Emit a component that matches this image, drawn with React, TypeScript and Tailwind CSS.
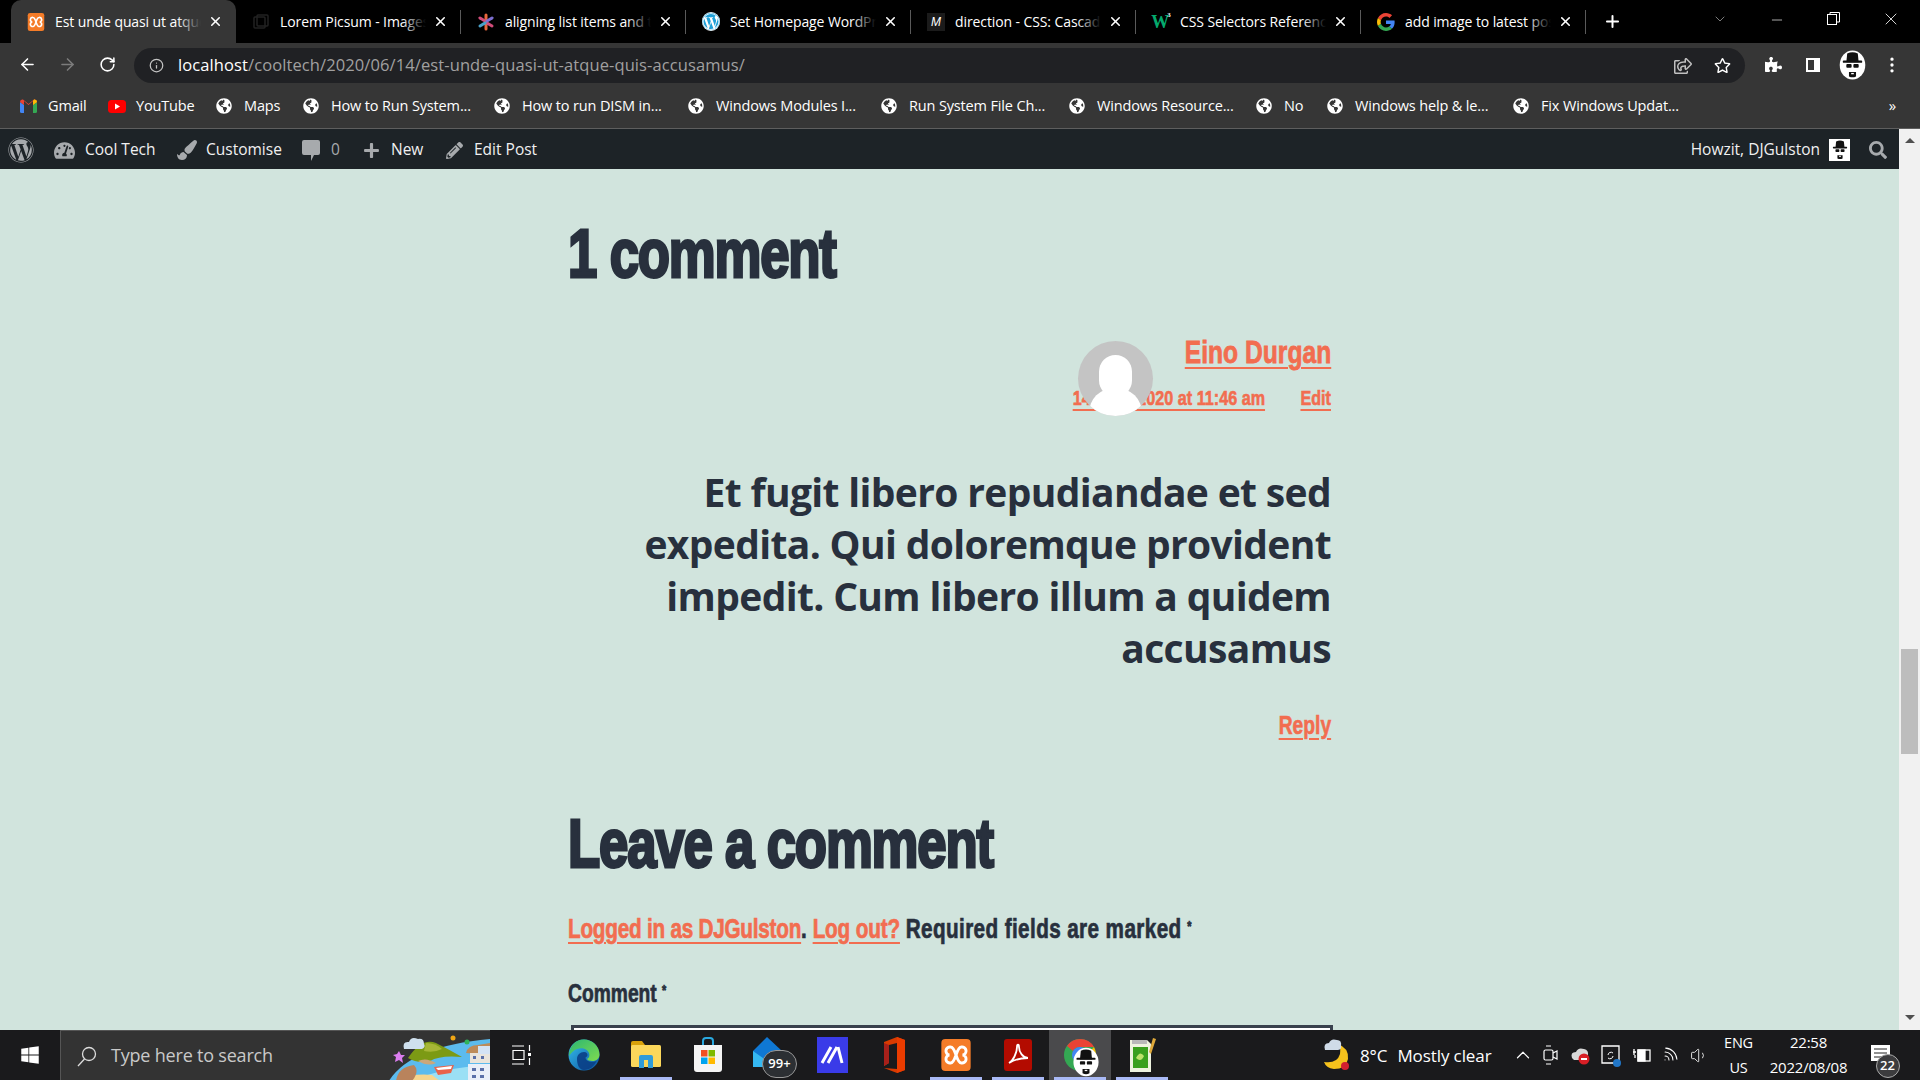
import React from "react";
import { FaWordpress, FaGlobeAmericas, FaTachometerAlt, FaPaintBrush, FaPlus, FaPencilAlt, FaSearch, FaWindows, FaPuzzlePiece, FaRegStar, FaRegShareSquare } from "react-icons/fa";
import { ArrowLeft, ArrowRight, RotateCw, Info, X, Plus, ChevronDown, Minus, EllipsisVertical, ChevronUp, Wifi, Volume1 } from "lucide-react";

const impact = "font-['Liberation_Sans',sans-serif] font-bold";

function Google({ size = 18 }: { size?: number }) {
  return (
    <svg width={size} height={size} viewBox="0 0 48 48">
      <path fill="#EA4335" d="M24 9.5c3.5 0 6.7 1.2 9.2 3.600l6.900-6.900C35.900 2.400 30.400 0 24 0 14.600 0 6.500 5.400 2.600 13.200l8 6.200C12.500 13.600 17.800 9.500 24 9.500z" />
      <path fill="#4285F4" d="M47 24.500c0-1.600-.1-3.100-.4-4.500H24v9h13c-.6 3-2.300 5.500-4.800 7.200l7.700 6c4.500-4.200 7.100-10.300 7.100-17.700z" />
      <path fill="#FBBC05" d="M10.500 28.600c-.5-1.400-.8-3-.8-4.600s.3-3.200.8-4.600l-8-6.200C.9 16.500 0 20.100 0 24s.9 7.500 2.600 10.800l7.900-6.200z" />
      <path fill="#34A853" d="M24 48c6.500 0 11.900-2.100 15.900-5.800l-7.700-6c-2.200 1.400-4.900 2.300-8.200 2.300-6.200 0-11.500-4.200-13.400-9.800l-8 6.200C6.500 42.600 14.600 48 24 48z" />
    </svg>
  );
}

function Heisen({ w = 30, h = 34 }: { w?: number; h?: number }) {
  return (
    <svg width={w} height={h} viewBox="0 0 30 34">
      <ellipse cx="15" cy="17" rx="14.500" ry="16.500" fill="#fff" />
      <path d="M8 14 L9 4 Q15 1 21 4 L22 14 Z" fill="#111" />
      <rect x="4" y="12" width="22" height="2.500" rx="1" fill="#111" />
      <rect x="8" y="16" width="6" height="4" rx="1" fill="#111" />
      <rect x="16" y="16" width="6" height="4" rx="1" fill="#111" />
      <path d="M11 25 h8 v5 q-4 2 -8 0 Z" fill="#111" />
      <rect x="13.500" y="26" width="3" height="1.500" fill="#fff" />
    </svg>
  );
}

function Xampp({ size = 18 }: { size?: number }) {
  return (
    <svg width={size} height={size} viewBox="0 0 24 24">
      <rect x="1" y="0" width="22" height="24" rx="3" fill="#f57c28" />
      <path d="M8 6 a3 3 0 0 0 -1 6 a3 3 0 0 0 1 6 q2 0 4 -6 q2 -6 4 -6 a3 3 0 0 1 1 6 a3 3 0 0 1 -1 6 q-2 0 -4 -6 q-2 -6 -4 -6 Z" fill="none" stroke="#fff" strokeWidth="2.200" />
    </svg>
  );
}

const tabs: { icon: React.ReactNode; title: string; active?: boolean }[] = [
  { icon: <Xampp />, title: "Est unde quasi ut atque quis accusamus", active: true },
  { icon: <svg width="16" height="16" viewBox="0 0 16 16"><rect x="1" y="3" width="11" height="11" rx="1" fill="none" stroke="#222" strokeWidth="1.500" /><rect x="4" y="1" width="11" height="11" rx="1" fill="none" stroke="#222" strokeWidth="1.500" /></svg>, title: "Lorem Picsum - Images" },
  { icon: <svg width="18" height="18" viewBox="0 0 18 18"><g strokeWidth="3" strokeLinecap="round"><path d="M9 2v6" stroke="#e8663c" /><path d="M9 10v6" stroke="#e8663c" /><path d="M3 5l5 3" stroke="#d24c7a" /><path d="M15 13l-5-3" stroke="#d24c7a" /><path d="M15 5l-5 3" stroke="#7c6fd0" /><path d="M3 13l5-3" stroke="#4aa0c8" /></g></svg>, title: "aligning list items and text" },
  { icon: <FaWordpress size={19} color="#1ea0d8" className="bg-white rounded-full" />, title: "Set Homepage WordPress" },
  { icon: <span className="w-[18px] h-[18px] bg-[#1b1b1b] flex items-center justify-center text-[12px] italic text-white font-['Liberation_Sans',sans-serif]">M</span>, title: "direction - CSS: Cascading" },
  { icon: <span className="flex w-[21px] text-[#04aa6d] font-['Liberation_Serif',serif] font-bold text-[18px] leading-none">W<sup className="text-[7px] text-white top-[2px] -ml-[2px]">3</sup></span>, title: "CSS Selectors Reference" },
  { icon: <Google />, title: "add image to latest post" },
];

const bookmarks: { w: string; label: string; kind: string }[] = [
  { w: "w-[37px]", label: "Gmail", kind: "gmail" },
  { w: "w-[57px]", label: "YouTube", kind: "yt" },
  { w: "w-[36px]", label: "Maps", kind: "g" },
  { w: "w-[140px]", label: "How to Run System...", kind: "g" },
  { w: "w-[143px]", label: "How to run DISM in...", kind: "g" },
  { w: "w-[142px]", label: "Windows Modules I...", kind: "g" },
  { w: "w-[137px]", label: "Run System File Ch...", kind: "g" },
  { w: "w-[136px]", label: "Windows Resource...", kind: "g" },
  { w: "w-[20px]", label: "No", kind: "g" },
  { w: "w-[135px]", label: "Windows help & le...", kind: "g" },
  { w: "w-[139px]", label: "Fix Windows Updat...", kind: "g" },
];

function BmIcon({ kind }: { kind: string }) {
  if (kind === "gmail")
    return (
      <svg width="17" height="14" viewBox="0 0 17 14">
        <path d="M0 3v9.500Q0 14 1.500 14H4V6z" fill="#4285F4" />
        <path d="M17 3v9.500Q17 14 15.500 14H13V6z" fill="#34A853" />
        <path d="M0 3Q0 0 3 .5L8.500 5 14 .5Q17 0 17 3L13 6V2L8.500 6 4 2v4z" fill="#EA4335" />
        <path d="M13 2l1-1.500Q17 0 17 3l-4 3z" fill="#FBBC05" />
      </svg>
    );
  if (kind === "yt")
    return (
      <svg width="18" height="13" viewBox="0 0 18 13">
        <rect width="18" height="13" rx="3.500" fill="#f00" />
        <path d="M7 3.500 L12 6.500 L7 9.500 Z" fill="#fff" />
      </svg>
    );
  return <FaGlobeAmericas size={16} color="#fff" />;
}

function Edge() {
  return (
    <svg width="32" height="32" viewBox="0 0 32 32">
      <defs>
        <linearGradient id="eg1" x1="0" y1="0" x2="1" y2="1"><stop offset="0" stopColor="#35c1f1" /><stop offset="1" stopColor="#0b4f9a" /></linearGradient>
        <linearGradient id="eg2" x1="0" y1="0" x2="1" y2="1"><stop offset="0" stopColor="#2bb673" /><stop offset="1" stopColor="#7fdc4f" /></linearGradient>
      </defs>
      <circle cx="16" cy="16" r="15.500" fill="url(#eg1)" />
      <path d="M16 .5C24 .5 31.500 7 31.500 15.500c0 4-3 6.500-7 6.500-3 0-5-1-5.500-2 2-1 3-3 2-6-1.500-4-7-6-12-4C6 11 3 14 1 17 1 8 7 .5 16 .5z" fill="url(#eg2)" />
      <path d="M9 20c0-4 3-7 7-7 2.500 0 3.500 1.500 3.500 3 0 1-1 2-2 2.500 0 3 3.500 4.500 7 4.500 1.500 0 3-.5 4-1-2 5-7 9-12.500 9-5 0-7-6-7-11z" fill="#0a3f86" opacity=".9" />
    </svg>
  );
}
function Folder() {
  return (
    <svg width="32" height="30" viewBox="0 0 32 30">
      <path d="M1 3q0-2 2-2h9l3 4v3H1z" fill="#d9a20b" />
      <rect x="1" y="5" width="30" height="22" rx="1.500" fill="#fbd75b" />
      <path d="M9 28V17q0-2 2-2h10q2 0 2 2v11h-5v-8h-4v8z" fill="#2f9bd9" />
    </svg>
  );
}
function Store() {
  return (
    <svg width="30" height="36" viewBox="0 0 30 36">
      <path d="M10 9V4q0-3 3-3h4q3 0 3 3v5" fill="none" stroke="#2aa9e0" strokeWidth="2" />
      <path d="M1 8h28v24q0 3-3 3H4q-3 0-3-3z" fill="#f5f5f5" />
      <rect x="8" y="13" width="6.500" height="6.500" fill="#f25022" />
      <rect x="15.500" y="13" width="6.500" height="6.500" fill="#7fba00" />
      <rect x="8" y="20.500" width="6.500" height="6.500" fill="#00a4ef" />
      <rect x="15.500" y="20.500" width="6.500" height="6.500" fill="#ffb900" />
    </svg>
  );
}
function Mail() {
  return (
    <div className="relative w-[36px] h-[38px] mt-[2px]">
      <svg width="32" height="30" viewBox="0 0 32 30" className="absolute left-0 top-0">
        <path d="M15 0 L30 14 V30 H1 V14 Z" fill="#0f78d4" />
        <path d="M1 14 L15 24 L30 14 V30 H1 Z" fill="#35b8f2" />
      </svg>
      <span className="absolute left-[10px] top-[13px] w-[35px] h-[28px] rounded-full bg-[#2c2f33] border border-[#999] flex items-center justify-center text-white text-[13px] font-semibold">99+</span>
    </div>
  );
}
function Slash() {
  return (
    <svg width="31" height="36" viewBox="0 0 31 36">
      <rect width="31" height="36" fill="#3a3be8" />
      <path d="M5 26 L14 10 M11 26 L20 10" stroke="#fff" strokeWidth="3" />
      <path d="M21 10 L25 26" stroke="#fff" strokeWidth="3" />
    </svg>
  );
}
function Office() {
  return (
    <svg width="24" height="36" viewBox="0 0 24 36">
      <path d="M2 5 L15 0 L23 3 V33 L15 36 L2 31 L15 32 V6 L7 8 V26 L2 29 Z" fill="#d83b01" />
      <path d="M15 0 L23 3 V33 L15 36 Z" fill="#eb3c00" />
      <path d="M2 6 L7 8 V26 L2 29 Z" fill="#a8201a" />
    </svg>
  );
}
function Acrobat() {
  return (
    <svg width="28" height="32" viewBox="0 0 28 32">
      <rect width="28" height="32" rx="3" fill="#b30b00" />
      <path d="M5 24 C9 22 13 14 13 8 C13 5 15 5 15 8 C15 13 19 19 24 19 C19 19 11 20 5 24 Z" fill="none" stroke="#fff" strokeWidth="1.800" />
    </svg>
  );
}
function Chrome() {
  return (
    <div className="relative w-[34px] h-[38px]">
      <svg width="34" height="34" viewBox="0 0 34 34" className="absolute left-0 top-[2px]">
        <circle cx="17" cy="17" r="16" fill="#34a853" />
        <path d="M17 1 A16 16 0 0 1 31 9 L17 9 A8 8 0 0 0 10 13 L4 8 A16 16 0 0 1 17 1 Z" fill="#ea4335" />
        <path d="M31 9 A16 16 0 0 1 22 32 L17 25 Z" fill="#fbbc05" />
        <circle cx="17" cy="17" r="8" fill="#4285f4" />
      </svg>
      <div className="absolute left-[10px] top-[11px]"><Heisen w={26} h={30} /></div>
    </div>
  );
}
function Notes() {
  return (
    <svg width="30" height="34" viewBox="0 0 30 34">
      <path d="M3 2h17l4 4v28H3z" fill="#eef3df" />
      <rect x="5" y="2" width="15" height="4" fill="#b9b9b9" />
      <rect x="6" y="9" width="15" height="21" fill="#3aa01e" />
      <path d="M9 20 q4-8 8-2 q-3 7-8 2z" fill="#bde26a" />
      <path d="M26 0 L29 1 L24 16 L22 14 Z" fill="#e0a93a" />
    </svg>
  );
}

function Beach() {
  return (
    <svg width="120" height="50" viewBox="0 0 120 50">
      <path d="M14 60 Q30 16 120 8 V60 Z" fill="#5cbbee" />
      <path d="M30 60 Q50 38 120 34 V60 Z" fill="#9be0f5" />
      <path d="M30 50 Q40 42 62 44 L70 50 Z" fill="#f6d58e" />
      <path d="M26 50 Q28 36 44 34 Q50 40 42 50 Z" fill="#b9835c" />
      <path d="M38 27 Q52 6 66 12 Q78 18 92 26 Q70 24 60 30 Q48 33 38 27 Z" fill="#7c9a14" />
      <path d="M56 12 Q66 12 72 18 Q64 22 54 20 Z" fill="#a6b636" />
      <path d="M48 30 Q56 26 66 32 Q58 36 48 30 Z" fill="#cca77a" />
      <path d="M108 14 q-10 0 -12 8 l24 2 V12 Z" fill="#bd8b5a" />
      <path d="M34 18 q-2 -8 5 -7 q2 -6 9 -3 q6 -1 6 5 q2 3 -2 5 Z" fill="#cfe0ee" />
      <circle cx="83" cy="7" r="2.500" fill="#f0a615" />
      <circle cx="97" cy="11" r="2.500" fill="#2fb35b" />
      <path d="M29 20 l2 4 l4 0 l-3 3 l1 5 l-4 -3 l-4 2 l1 -5 l-3 -2 l4 -1 Z" fill="#dc7ef0" />
      <path d="M64 36 l20 -2 l-3 8 l-13 2 Z" fill="#e8634a" />
      <path d="M66 37 l16 -2 l-1 3 l-13 1 Z" fill="#fff" />
      <rect x="100" y="22" width="20" height="10" fill="#e9e4dc" />
      <rect x="108" y="15" width="12" height="8" fill="#d4e3f5" />
      <rect x="98" y="33" width="22" height="17" fill="#e9eef8" />
      <g fill="#5a6fa8"><rect x="103" y="25" width="3" height="3" /><rect x="111" y="25" width="3" height="3" /><rect x="102" y="37" width="4" height="3" /><rect x="110" y="37" width="4" height="3" /><rect x="102" y="44" width="4" height="3" /><rect x="110" y="44" width="4" height="3" /></g>
    </svg>
  );
}

const taskIcons = [
  { icon: <Edge /> },
  { icon: <Folder />, on: true },
  { icon: <Store /> },
  { icon: <Mail /> },
  { icon: <Slash /> },
  { icon: <Office /> },
  { icon: <Xampp size={32} />, on: true },
  { icon: <Acrobat />, on: true },
  { icon: <Chrome />, on: true, sel: true },
  { icon: <Notes />, on: true },
];

export default function App() {
  return (
    <div className="w-[1920px] h-[1080px] overflow-hidden flex flex-col font-['Open_Sans',sans-serif] bg-[#d1e4dd]">
      {/* tab strip */}
      <div className="h-[43px] shrink-0 bg-black flex items-stretch pl-[11px] text-white">
        {tabs.map((t, i) => (
          <div key={i} className={`relative w-[225px] shrink-0 flex items-center pl-[16px] ${t.active ? "bg-[#363636] rounded-t-[10px]" : ""}`}>
            <span className="w-[18px] h-[18px] shrink-0 flex items-center justify-center">{t.icon}</span>
            <div className="relative ml-[10px] w-[146px] overflow-hidden whitespace-nowrap text-[14px] tracking-[-0.1px] -mt-[1px]">
              {t.title}
              <span className={`absolute right-0 top-0 bottom-0 w-[24px] bg-gradient-to-r from-transparent ${t.active ? "to-[#363636]" : "to-black"}`} />
            </div>
            <X size={15} strokeWidth={2.5} className="absolute left-[197px] top-[14px]" />
            {!t.active ? <span className="absolute right-0 top-[10px] h-[24px] w-px bg-[#5a5a5a]" /> : null}
          </div>
        ))}
        <div className="ml-[17px] flex items-center"><Plus size={19} strokeWidth={2.5} /></div>
        <div className="ml-[90px] mb-[6px] flex items-center text-[#bbb]"><ChevronDown size={16} strokeWidth={1} /></div>
        <div className="ml-[41px] mb-[4px] flex items-center w-[16px]"><Minus size={16} strokeWidth={1} /></div>
        <div className="ml-[42px] mb-[6px] flex items-center">
          <svg width="13" height="13" viewBox="0 0 13 13" fill="none" stroke="#fff"><rect x=".5" y="2.500" width="9" height="10" /><path d="M3 2.500V.5h9.500V10H9.500" /></svg>
        </div>
        <div className="ml-[41px] mb-[6px] flex items-center"><X size={20} strokeWidth={1} /></div>
      </div>

      {/* toolbar */}
      <div className="h-[43px] shrink-0 bg-[#363636] flex items-center text-white">
        <ArrowLeft size={19} strokeWidth={2} className="ml-[18px]" />
        <ArrowRight size={19} strokeWidth={2} className="ml-[21px] text-[#7c7c7c]" />
        <RotateCw size={17} strokeWidth={2.2} className="ml-[22px]" />
        <div className="ml-[18px] mt-[2px] w-[1611px] h-[35px] rounded-full bg-[#202124] flex items-center pl-[15px]">
          <Info size={15} className="text-[#c4c4c4] shrink-0" />
          <div className="ml-[14px] whitespace-nowrap text-[16.500px] tracking-[0.1px] text-[#a0a0a0]"><span className="text-white">localhost</span>/cooltech/2020/06/14/est-unde-quasi-ut-atque-quis-accusamus/</div>
          <FaRegShareSquare size={18} className="ml-auto text-[#c0c0c0]" />
          <FaRegStar size={17} className="ml-[22px] mr-[14px] text-white" />
        </div>
        <FaPuzzlePiece size={17} className="ml-[20px]" />
        <svg width="16" height="16" viewBox="0 0 16 16" className="ml-[23px]"><rect x="1" y="1" width="14" height="14" fill="#fff" /><rect x="3" y="3" width="6" height="10" fill="#363636" /></svg>
        <div className="ml-[17px]"><Heisen w={29} h={30} /></div>
        <EllipsisVertical size={20} className="ml-[15px]" />
      </div>

      {/* bookmarks */}
      <div className="h-[43px] shrink-0 bg-[#363636] border-b border-[#5e5e5e] flex items-center pl-[20px] pb-[2px] gap-[23px] text-white text-[14.500px] tracking-[-0.15px] relative">
        {bookmarks.map((b, i) => (
          <div key={i} className="flex items-center shrink-0">
            <span className="w-[28px] h-[18px] flex items-center justify-start"><BmIcon kind={b.kind} /></span>
            <span className={`${b.w} whitespace-nowrap`}>{b.label}</span>
          </div>
        ))}
        <span className="absolute right-[24px] top-[8px] text-[15px]">»</span>
      </div>

      {/* below browser chrome */}
      <div className="flex-1 min-h-0 flex">
        <div className="flex-1 min-w-0 flex flex-col">
          {/* WP admin bar */}
          <div className="h-[40px] shrink-0 bg-[#1d2327] flex items-center pt-[2px] text-[#f0f0f1] text-[15.500px] pr-[12px]">
            <FaWordpress size={26} className="ml-[8px] text-[#a7aaad]" />
            <FaTachometerAlt size={21} className="ml-[20px] text-[#a7aaad]" />
            <span className="ml-[10px] w-[74px] whitespace-nowrap">Cool Tech</span>
            <FaPaintBrush size={20} className="ml-[18px] text-[#a7aaad]" />
            <span className="ml-[9px] w-[74px] whitespace-nowrap">Customise</span>
            <svg width="18" height="23" viewBox="0 0 18 23" className="ml-[22px] mt-[3px]"><path d="M2 0h14q2 0 2 2v11q0 2-2 2h-4l-3 6v-6H2q-2 0-2-2V2q0-2 2-2z" fill="#a7aaad" /></svg>
            <span className="ml-[11px] w-[12px] text-[#a7aaad]">0</span>
            <FaPlus size={17} className="ml-[20px] text-[#a7aaad]" />
            <span className="ml-[11px] w-[34px] whitespace-nowrap">New</span>
            <FaPencilAlt size={17} className="ml-[21px] text-[#a7aaad]" />
            <span className="ml-[11px] whitespace-nowrap">Edit Post</span>
            <span className="ml-auto whitespace-nowrap">Howzit, DJGulston</span>
            <div className="ml-[9px] w-[21px] h-[22px] bg-white flex justify-center overflow-hidden"><Heisen w={20} h={22} /></div>
            <FaSearch size={18} className="ml-[19px] text-[#a7aaad]" />
          </div>

          {/* page */}
          <main className="flex-1 min-h-0 overflow-hidden pl-[568px] text-[#28303d]">
            <div className="w-[765px]">
              <h2 className={`${impact} text-[68px] leading-[68px] mt-[50px] whitespace-nowrap`}><span className="inline-block origin-left scale-x-[0.775] [-webkit-text-stroke:3px_#28303d] tracking-[-1.5px]">1 comment</span></h2>
              <div className="relative mt-[47px] h-[76px] text-right text-[#f26d50] pr-[2px]">
                <div className={`${impact} text-[32px] leading-[36px]`}><span className="inline-block origin-right scale-x-[0.77] underline decoration-2 underline-offset-[4px] [-webkit-text-stroke:0.8px_#f26d50]">Eino Durgan</span></div>
                <div className={`${impact} mt-[16px] flex justify-end gap-[46px] text-[21px] leading-[24px] origin-right scale-x-[0.77] [-webkit-text-stroke:0.6px_#f26d50]`}>
                  <span className="underline underline-offset-[4px]">14 June 2020 at 11:46 am</span>
                  <span className="underline underline-offset-[4px]">Edit</span>
                </div>
                <div className="absolute left-[510px] top-[7px] w-[75px] h-[75px] rounded-full bg-[#c4c4c4] overflow-hidden">
                  <div className="absolute left-[21px] top-[14px] w-[33px] h-[42px] rounded-full bg-white" />
                  <div className="absolute left-[11px] top-[47px] w-[53px] h-[50px] rounded-full bg-white" />
                </div>
              </div>
              <p className="mt-[56px] pr-[2px] text-right font-bold text-[39px] leading-[52px] tracking-[-0.65px]">Et fugit libero repudiandae et sed expedita. Qui doloremque provident impedit. Cum libero illum a quidem accusamus</p>
              <div className={`${impact} mt-[37px] pr-[2px] text-right text-[#f26d50] text-[25px] leading-[28px]`}><span className="inline-block origin-right scale-x-[0.77] underline underline-offset-[4px] [-webkit-text-stroke:0.6px_#f26d50]">Reply</span></div>
              <h2 className={`${impact} text-[68px] leading-[68px] mt-[70px] whitespace-nowrap`}><span className="inline-block origin-left scale-x-[0.775] [-webkit-text-stroke:3px_#28303d] tracking-[-1.5px]">Leave a comment</span></h2>
              <p className={`${impact} mt-[35px] text-[27px] leading-[34px] whitespace-nowrap`}>
                <span className="inline-block origin-left scale-x-[0.767] [-webkit-text-stroke:0.7px_#28303d]">
                  <span className="text-[#f26d50] underline underline-offset-[4px] tracking-[-0.3px] [-webkit-text-stroke:0.7px_#f26d50]">Logged in as DJGulston</span>. <span className="text-[#f26d50] underline underline-offset-[4px] tracking-[-0.2px] [-webkit-text-stroke:0.7px_#f26d50]">Log out?</span> <span className="tracking-[0.5px]">Required fields are marked</span> <sup className="text-[14px]">*</sup>
                </span>
              </p>
              <p className={`${impact} mt-[32px] text-[25px] leading-[30px] whitespace-nowrap`}><span className="inline-block origin-left scale-x-[0.77] [-webkit-text-stroke:0.7px_#28303d]">Comment <sup className="text-[14px]">*</sup></span></p>
              <div className="mt-[17px] ml-[3px] w-[762px] h-[120px] bg-white border-[3px] border-[#39414d]" />
            </div>
          </main>
        </div>
        {/* scrollbar */}
        <div className="w-[21px] shrink-0 bg-[#f1f1f1] flex flex-col items-center justify-between relative pb-[10px] pt-[9px]">
          <span className="w-0 h-0 border-x-[5px] border-x-transparent border-b-[5px] border-b-[#505050]" />
          <span className="w-0 h-0 border-x-[5px] border-x-transparent border-t-[5px] border-t-[#505050]" />
          <span className="absolute left-[2px] top-[520px] w-[17px] h-[105px] bg-[#bdbdbd]" />
        </div>
      </div>

      {/* taskbar */}
      <div className="h-[50px] shrink-0 bg-[#1a1a1c] flex items-stretch text-white">
        <div className="w-[60px] flex items-center justify-center"><FaWindows size={20} /></div>
        <div className="w-[430px] bg-[#333] border-t border-[#555] border-l flex items-center relative overflow-hidden">
          <svg width="22" height="22" viewBox="0 0 22 22" fill="none" stroke="#ddd" strokeWidth="1.300" className="ml-[15px]"><circle cx="13" cy="9" r="6.500" /><path d="M8.500 14 L2 21" /></svg>
          <span className="ml-[13px] text-[18px] text-[#c9c9c9] tracking-[-0.2px]">Type here to search</span>
          <div className="ml-auto h-[50px]"><Beach /></div>
        </div>
        <div className="w-[63px] flex items-center justify-center">
          <svg width="22" height="20" viewBox="0 0 22 20" fill="none" stroke="#fff" strokeWidth="1.200"><path d="M1 1h12M1 19h12M2 5.500h11v9H2z" /><path d="M18.500 0v6M18.500 13v7" /><rect x="17" y="8" width="3" height="3" fill="#fff" stroke="none" /></svg>
        </div>
        {taskIcons.map((t, i) => (
          <div key={i} className={`relative w-[62px] flex items-center justify-center ${t.sel ? "bg-[#4a4a4c]" : ""}`}>
            {t.icon}
            {t.on ? <span className="absolute left-[5px] right-[5px] bottom-0 h-[3px] bg-[#a9b9f5]" /> : null}
          </div>
        ))}
        <div className="ml-[148px] flex items-center">
          <svg width="32" height="38" viewBox="0 0 32 38">
            <path d="M17 8 Q28 12 27 23 Q25 33 13 33 Q5 32 3 26 Q16 28 19 18 Q20 12 17 8Z" fill="#f6c21c" />
            <path d="M4 14 q-2 -7 4 -7 q2 -5 8 -3 q5 0 4 6 q1 3 -3 4 Z" fill="#cfdbe8" />
            <circle cx="24" cy="30" r="4" fill="#d3202f" />
          </svg>
        </div>
        <span className="ml-[7px] mt-[13px] text-[17px] tracking-[-0.1px] whitespace-nowrap">8°C</span>
        <span className="ml-[10px] mt-[13px] text-[17px] tracking-[-0.1px] whitespace-nowrap">Mostly clear</span>
        <div className="ml-[20px] flex items-center"><ChevronUp size={22} strokeWidth={1.3} /></div>
        <div className="ml-[9px] flex items-center">
          <svg width="15" height="22" viewBox="0 0 15 22" fill="none" stroke="#fff" strokeWidth="1.200"><rect x="1" y="6" width="9" height="10" rx="1.500" /><path d="M10 9l4-2v8l-4-2M3 2h5M3 20h5" /></svg>
        </div>
        <div className="ml-[12px] flex items-center relative">
          <svg width="22" height="22" viewBox="0 0 22 22"><path d="M2 14 q-2 -6 4 -6 q2 -5 8 -3 q5 1 4 7 l-4 4 H4Z" fill="#d8d8d8" /><circle cx="14" cy="15" r="5.500" fill="#d81f26" /><rect x="11" y="14" width="6" height="2" fill="#fff" /></svg>
        </div>
        <div className="ml-[9px] flex items-center">
          <svg width="22" height="24" viewBox="0 0 22 24"><path d="M1 3h17v17H1z" fill="none" stroke="#fff" strokeWidth="1.300" /><path d="M7 12a3 3 0 0 1 5-2M12 13a3 3 0 0 1-5 2" fill="none" stroke="#fff" /><circle cx="16" cy="20" r="4" fill="#2176c7" /></svg>
        </div>
        <div className="ml-[9px] flex items-center">
          <svg width="19" height="16" viewBox="0 0 19 16" fill="none" stroke="#fff" strokeWidth="1.300"><rect x="6" y="3" width="12" height="11" /><rect x="6" y="3" width="7" height="11" fill="#fff" /><path d="M1 5h3M2 2v6M3 8v3" /></svg>
        </div>
        <div className="ml-[9px] flex items-center"><Wifi size={19} strokeWidth={1.300} className="rotate-45" /></div>
        <div className="ml-[11px] flex items-center"><Volume1 size={19} strokeWidth={1.100} /></div>
        <div className="ml-[10px] w-[40px] flex flex-col items-center justify-center text-[14.500px] leading-[25px] tracking-[-0.2px] -mt-[1px]"><span>ENG</span><span>US</span></div>
        <div className="ml-[5px] w-[90px] flex flex-col items-center justify-center text-[15px] leading-[25px] tracking-[-0.2px]"><span>22:58</span><span>2022/08/08</span></div>
        <div className="relative ml-[16px] w-[30px]">
          <svg width="20" height="17" viewBox="0 0 20 17" className="absolute left-[1px] top-[15px]"><path d="M0 0h19v16H0z" fill="#fff" /><path d="M3 4h13M3 8h13M3 12h9" stroke="#222" /></svg>
          <span className="absolute left-[6px] top-[24px] w-[24px] h-[24px] rounded-full bg-[#3c3c3e] border border-[#aaa] flex items-center justify-center text-[13px] font-semibold">22</span>
        </div>
      </div>
    </div>
  );
}
